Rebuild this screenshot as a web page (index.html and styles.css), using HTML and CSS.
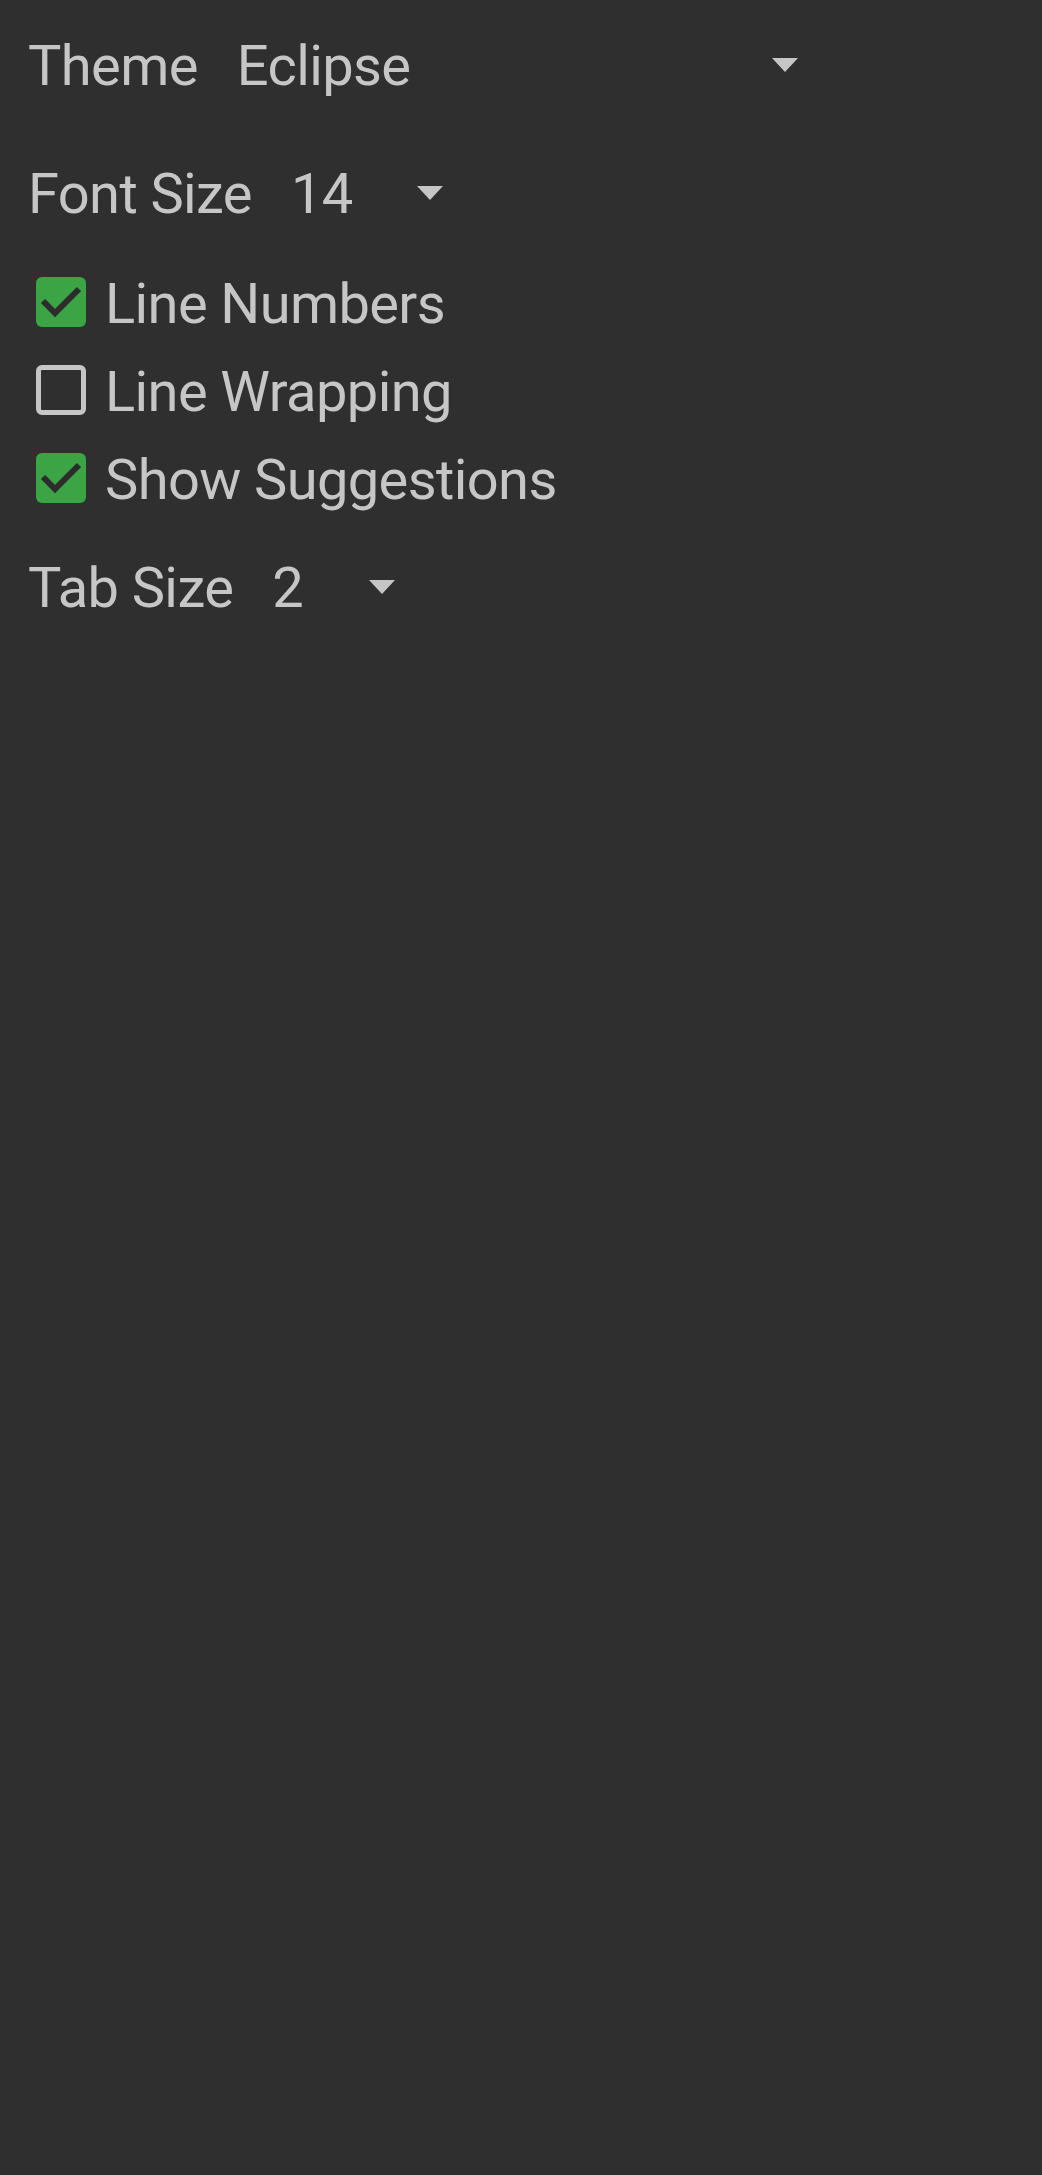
FILE: index.html
```html
<!DOCTYPE html>
<html lang="en">
<head>
<meta charset="utf-8">
<title>Editor Settings</title>
<link rel="stylesheet" href="styles.css">
</head>
<body>
<main class="settings">
  <div class="row row-theme">
    <span class="label">Theme</span>
    <div class="spinner spinner-theme">
      <span class="value">Eclipse</span>
      <svg class="arrow" width="26" height="14" viewBox="0 0 26 14"><polygon points="0,0 26,0 13,14"/></svg>
    </div>
  </div>
  <div class="row row-font">
    <span class="label">Font Size</span>
    <div class="spinner spinner-font">
      <span class="value">14</span>
      <svg class="arrow" width="26" height="14" viewBox="0 0 26 14"><polygon points="0,0 26,0 13,14"/></svg>
    </div>
  </div>
  <div class="checks">
    <label class="check-row">
      <span class="box checked">
        <svg width="50" height="50" viewBox="0 0 50 50"><polyline points="7,24 19,36 43,12"/></svg>
      </span>
      <span class="check-label">Line Numbers</span>
    </label>
    <label class="check-row">
      <span class="box"></span>
      <span class="check-label">Line Wrapping</span>
    </label>
    <label class="check-row">
      <span class="box checked">
        <svg width="50" height="50" viewBox="0 0 50 50"><polyline points="7,24 19,36 43,12"/></svg>
      </span>
      <span class="check-label">Show Suggestions</span>
    </label>
  </div>
  <div class="row row-tab">
    <span class="label">Tab Size</span>
    <div class="spinner spinner-tab">
      <span class="value">2</span>
      <svg class="arrow" width="26" height="14" viewBox="0 0 26 14"><polygon points="0,0 26,0 13,14"/></svg>
    </div>
  </div>
</main>
</body>
</html>
```

FILE: styles.css
```css
html, body {
  margin: 0;
  padding: 0;
  background: #2f2f2f;
}

body {
  min-height: 2175px;
  font-family: Roboto, "Noto Sans", "Liberation Sans", sans-serif;
  font-size: 56px;
  letter-spacing: -0.6px;
  line-height: 68px;
  color: #c6c6c6;
}

.settings {
  display: flex;
  flex-direction: column;
  padding: 32px 0 0 28px;
}

.row {
  display: flex;
  align-items: center;
  height: 68px;
}

.row-font {
  margin-top: 60px;
}

.row-tab {
  margin-top: 40px;
}

.label {
  white-space: nowrap;
}

.spinner {
  display: flex;
  align-items: center;
  margin-left: 39px;
}

.value {
  white-space: nowrap;
}

.spinner-theme .value { width: 535px; }
.spinner-font .value { width: 126px; }
.spinner-tab .value { width: 97px; }

.arrow {
  display: block;
  margin-top: -2px;
  fill: #c6c6c6;
}

.checks {
  display: flex;
  flex-direction: column;
  gap: 20px;
  margin-top: 42px;
}

.check-row {
  display: flex;
  align-items: center;
  height: 68px;
}

.box {
  box-sizing: border-box;
  width: 50px;
  height: 50px;
  margin-left: 8px;
  margin-bottom: 5px;
  border: 5px solid #c6c6c6;
  border-radius: 6px;
  flex: none;
}

.box.checked {
  border: none;
  background: #3ba444;
}

.box svg {
  display: block;
  fill: none;
  stroke: #2c2c2c;
  stroke-width: 6;
}

.check-label {
  margin-left: 19px;
  white-space: nowrap;
}
```
